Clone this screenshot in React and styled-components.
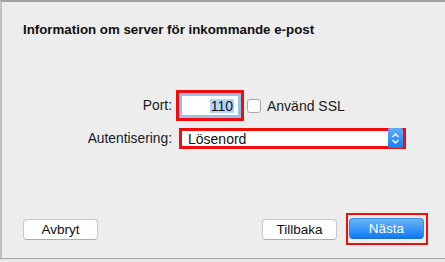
import React from "react";
import styled, { createGlobalStyle } from "styled-components";

const GlobalStyle = createGlobalStyle`
  body {
    margin: 0;
    font-family: "Liberation Sans", Arial, sans-serif;
    overflow: hidden;
  }
`;

const Page = styled.div`
  width: 445px;
  height: 262px;
  display: flex;
  flex-direction: column;
  background: #e6e6e6;
`;

const Sheet = styled.div`
  flex: 1;
  display: flex;
  flex-direction: column;
  background: #ededed;
  border-top: 2px solid #a3a3a3;
  border-left: 2px solid #c2c2c2;
  padding: 20px 17px 13px 21px;
  box-sizing: border-box;
`;

const Title = styled.div`
  font-size: 13.3px;
  font-weight: bold;
  line-height: 16px;
  color: #111;
`;

const Form = styled.div`
  margin-top: 52px;
  display: grid;
  grid-template-columns: 149px auto;
  column-gap: 4px;
  row-gap: 7px;
  align-items: center;
`;

const Label = styled.div`
  text-align: right;
  font-size: 13.8px;
  color: #1a1a1a;
`;

const Controls = styled.div`
  display: flex;
  align-items: center;
`;

const Highlight = styled.div`
  display: inline-flex;
  box-sizing: border-box;
  border: ${p => p.$thin ? 2 : 3}px solid #f20d0d;
  padding: ${p => p.$pad || "0"};
  margin-left: ${p => p.$offset || 0}px;
`;

const PortField = styled.div`
  width: 62px;
  height: 25px;
  box-sizing: border-box;
  border: 3px solid #9ac0ea;
  background: #fff;
  display: flex;
  align-items: center;
  justify-content: flex-end;
  padding-right: 4px;
  font-size: 14px;
  color: #111;
`;

const Selected = styled.span`
  background: #b4d5fe;
  line-height: 14px;
  padding: 0 1px;
`;

const Checkbox = styled.span`
  width: 14px;
  height: 14px;
  box-sizing: border-box;
  margin-left: 3px;
  border: 1px solid #a9a9a9;
  border-radius: 3px;
  background: #fff;
`;

const CheckLabel = styled.span`
  margin-left: 6px;
  font-size: 14px;
  color: #1a1a1a;
`;

const Popup = styled.div`
  width: 221px;
  height: 15px;
  background: #fff;
  display: flex;
  align-items: center;
  justify-content: space-between;
  font-size: 14px;
  color: #111;
`;

const PopupText = styled.span`
  padding-left: 6px;
`;

const Stepper = styled.div`
  width: 15px;
  height: 20px;
  margin: -4px 0 -3px;
  background: linear-gradient(#62adf9, #137ff6);
  border-radius: 2px;
  display: flex;
  align-items: center;
  justify-content: center;
`;

const Spacer = styled.div`
  flex: 1;
`;

const ButtonRow = styled.div`
  display: flex;
  align-items: center;
`;

const Button = styled.button`
  width: 75px;
  height: 21px;
  box-sizing: border-box;
  border: 1px solid ${p => p.$primary ? "#3d8ae4" : "#c8c8c8"};
  border-bottom-color: ${p => p.$primary ? "#1f6fd0" : "#acacac"};
  border-radius: 4px;
  background: ${p => p.$primary ? "linear-gradient(#6ab4fb, #0f7bf7)" : "#fff"};
  color: ${p => p.$primary ? "#fff" : "#111"};
  font-family: "Liberation Sans", Arial, sans-serif;
  font-size: 13.5px;
  padding: 0;
  margin-right: ${p => p.$gap || 0}px;
`;

const BottomStrip = styled.div`
  height: 3px;
  border-top: 1px solid #a3a3a3;
  background: #e9e9e9;
`;

function Chevrons() {
  return (
    <svg width="9" height="13" viewBox="0 0 9 13">
      <path d="M1.5 5 L4.5 2 L7.5 5" fill="none" stroke="#fff" strokeWidth="1.4" />
      <path d="M1.5 8 L4.5 11 L7.5 8" fill="none" stroke="#fff" strokeWidth="1.4" />
    </svg>
  );
}

export default function App() {
  return (
    <Page>
      <GlobalStyle />
      <Sheet>
        <Title>Information om server för inkommande e-post</Title>
        <Form>
          <Label>Port:</Label>
          <Controls>
            <Highlight>
              <PortField>
                <Selected>110</Selected>
              </PortField>
            </Highlight>
            <Checkbox />
            <CheckLabel>Använd SSL</CheckLabel>
          </Controls>
          <Label>Autentisering:</Label>
          <Controls>
            <Highlight $offset={3}>
              <Popup>
                <PopupText>Lösenord</PopupText>
                <Stepper>
                  <Chevrons />
                </Stepper>
              </Popup>
            </Highlight>
          </Controls>
        </Form>
        <Spacer />
        <ButtonRow>
          <Button>Avbryt</Button>
          <Spacer />
          <Button $gap={9}>Tillbaka</Button>
          <Highlight $thin $pad="3px 2px 4px 1px">
            <Button $primary>Nästa</Button>
          </Highlight>
        </ButtonRow>
      </Sheet>
      <BottomStrip />
    </Page>
  );
}
